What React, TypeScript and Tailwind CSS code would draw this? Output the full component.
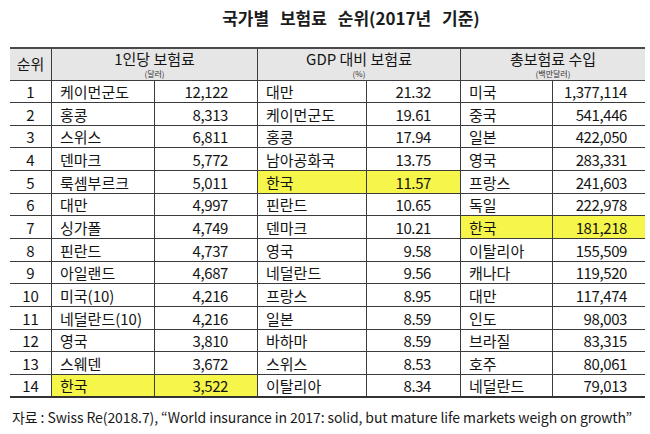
import React from "react";

type Row = [number, string, string, string, string, string, string];

const rows: Row[] = [
  [1, "케이먼군도", "12,122", "대만", "21.32", "미국", "1,377,114"],
  [2, "홍콩", "8,313", "케이먼군도", "19.61", "중국", "541,446"],
  [3, "스위스", "6,811", "홍콩", "17.94", "일본", "422,050"],
  [4, "덴마크", "5,772", "남아공화국", "13.75", "영국", "283,331"],
  [5, "룩셈부르크", "5,011", "한국", "11.57", "프랑스", "241,603"],
  [6, "대만", "4,997", "핀란드", "10.65", "독일", "222,978"],
  [7, "싱가폴", "4,749", "덴마크", "10.21", "한국", "181,218"],
  [8, "핀란드", "4,737", "영국", "9.58", "이탈리아", "155,509"],
  [9, "아일랜드", "4,687", "네덜란드", "9.56", "캐나다", "119,520"],
  [10, "미국(10)", "4,216", "프랑스", "8.95", "대만", "117,474"],
  [11, "네덜란드(10)", "4,216", "일본", "8.59", "인도", "98,003"],
  [12, "영국", "3,810", "바하마", "8.59", "브라질", "83,315"],
  [13, "스웨덴", "3,672", "스위스", "8.53", "호주", "80,061"],
  [14, "한국", "3,522", "이탈리아", "8.34", "네덜란드", "79,013"],
];

// which column pair is highlighted for 한국 (0 = 1인당, 1 = GDP, 2 = 총보험료)
const korea: Record<number, number> = { 14: 0, 5: 1, 7: 2 };

// row heights incl. bottom rule, sums to 317px
const heights = [
  "h-[22px]", "h-[23px]", "h-[22px]", "h-[23px]", "h-[23px]", "h-[22px]", "h-[23px]",
  "h-[23px]", "h-[22px]", "h-[23px]", "h-[23px]", "h-[22px]", "h-[23px]", "h-[23px]",
];

const cols = "grid grid-cols-[41px_103px_103px_109px_94px_92px_93px]";
const line = "border-l border-[#3c3c3c]";
const yellow = "bg-[#f6f54a]";

const HeadGroup = ({ title, unit }: { title: string; unit: string }) => (
  <div className={`col-span-2 ${line} flex flex-col items-center justify-center`}>
    <span className="text-[15px] leading-[15px]">{title}</span>
    <span className="mt-[3px] text-[8px] leading-[9px] text-[#333]">{unit}</span>
  </div>
);

export default function App() {
  return (
    <div className="h-[434px] w-[650px] bg-white text-[#141414] [font-family:'Noto_Sans_CJK_KR','Noto_Sans',sans-serif]">
      <div className="flex h-[47px] justify-center pl-[52px] pt-[6px]">
        <h1 className="text-[17px] font-bold leading-[24px] text-[#1c1c1c] [word-spacing:7px]">
          국가별 보험료 순위(2017년 기준)
        </h1>
      </div>

      <div className="ml-[10px] w-[635px]">
        <div className={`${cols} h-[34px] border-y border-t-2 border-[#4a4a4a] border-b-[#3c3c3c] bg-[#e6e6e6]`}>
          <div className="flex items-center justify-center text-[15px]">순위</div>
          <HeadGroup title="1인당 보험료" unit="(달러)" />
          <HeadGroup title="GDP 대비 보험료" unit="(%)" />
          <HeadGroup title="총보험료 수입" unit="(백만달러)" />
        </div>

        {rows.map((r, i) => {
          const hl = korea[r[0]];
          const last = i === rows.length - 1;
          return (
            <div
              key={r[0]}
              className={`${cols} ${heights[i]} text-[15px] leading-none ${
                last ? "border-b-2 border-[#333]" : "border-b border-[#3c3c3c]"
              }`}
            >
              <div className="flex items-center justify-center">{r[0]}</div>
              {[0, 1, 2].map((g) => {
                const bg = hl === g ? yellow : "";
                const pr = g === 2 ? "pr-[18px]" : "pr-[29px]";
                return (
                  <React.Fragment key={g}>
                    <div className={`${line} ${bg} flex items-center pl-[8px] whitespace-nowrap`}>
                      {r[1 + g * 2]}
                    </div>
                    <div className={`${line} ${bg} flex items-center justify-end ${pr} tracking-[-0.4px]`}>
                      {r[2 + g * 2]}
                    </div>
                  </React.Fragment>
                );
              })}
            </div>
          );
        })}
      </div>

      <p className="ml-[12px] mt-[9px] whitespace-nowrap text-[14px] leading-[20px] tracking-[-0.1px] text-[#1a1a1a]">
        자료 : Swiss Re(2018.7), “World insurance in 2017: solid, but mature life markets weigh on growth”
      </p>
    </div>
  );
}
